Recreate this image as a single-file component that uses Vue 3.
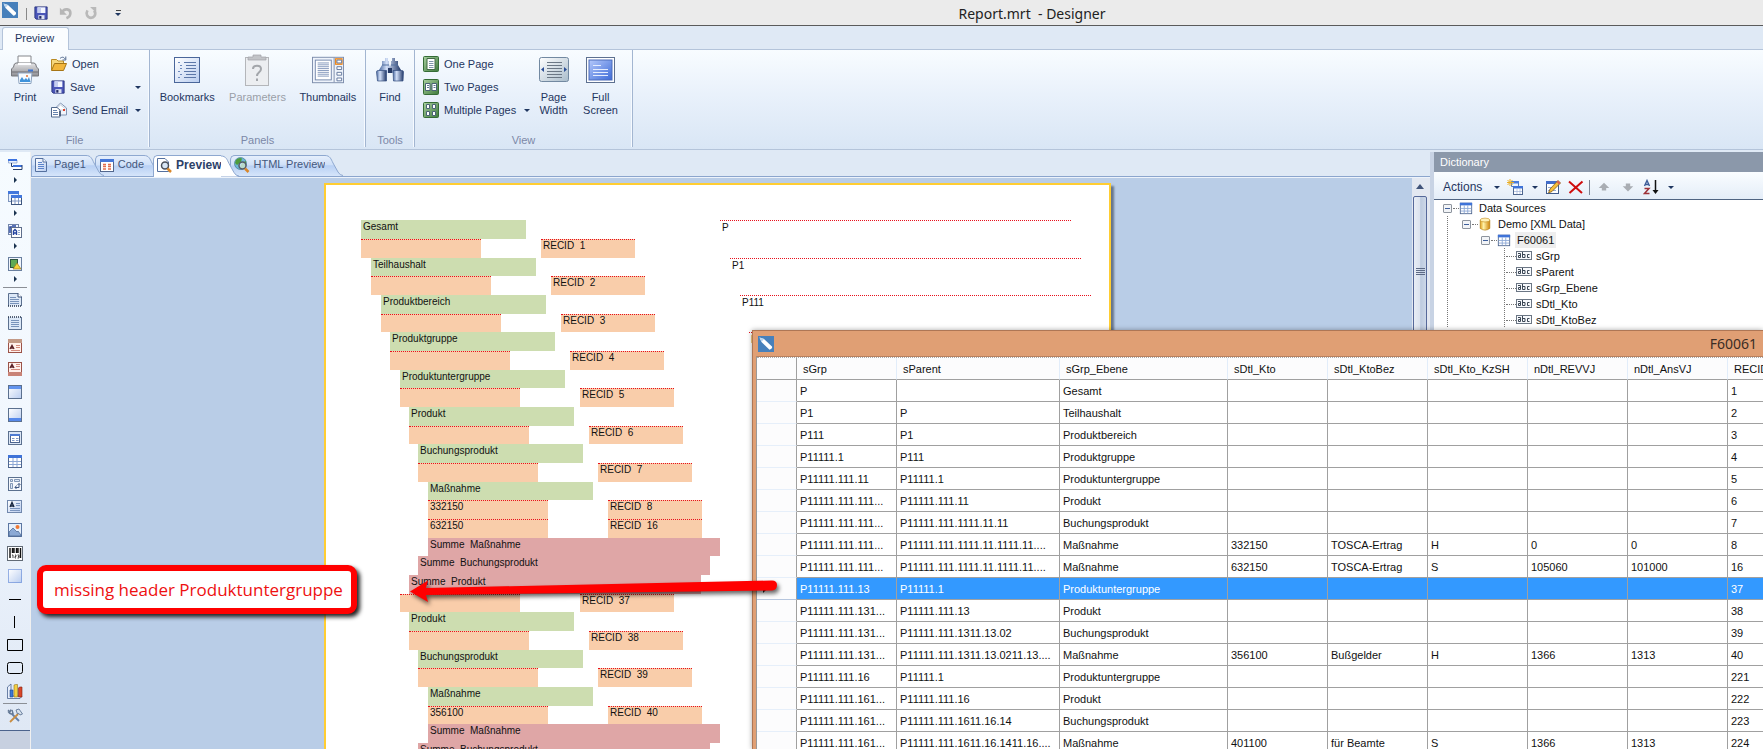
<script setup>
const reportRows = [
  { level: 0, kind: 'head', text: 'Gesamt', path: 'P' },
  { level: 0, kind: 'detail', recid: 1 },
  { level: 1, kind: 'head', text: 'Teilhaushalt', path: 'P1' },
  { level: 1, kind: 'detail', recid: 2 },
  { level: 2, kind: 'head', text: 'Produktbereich', path: 'P111' },
  { level: 2, kind: 'detail', recid: 3 },
  { level: 3, kind: 'head', text: 'Produktgruppe', path: 'P11111.1' },
  { level: 3, kind: 'detail', recid: 4 },
  { level: 4, kind: 'head', text: 'Produktuntergruppe' },
  { level: 4, kind: 'detail', recid: 5 },
  { level: 5, kind: 'head', text: 'Produkt' },
  { level: 5, kind: 'detail', recid: 6 },
  { level: 6, kind: 'head', text: 'Buchungsprodukt' },
  { level: 6, kind: 'detail', recid: 7 },
  { level: 7, kind: 'head', text: 'Maßnahme' },
  { level: 7, kind: 'detail', text: '332150', recid: 8 },
  { level: 7, kind: 'detail', text: '632150', recid: 16 },
  { level: 7, kind: 'sum', text: 'Summe  Maßnahme' },
  { level: 6, kind: 'sum', text: 'Summe  Buchungsprodukt' },
  { level: 5, kind: 'sum', text: 'Summe  Produkt' },
  { level: 4, kind: 'detail', recid: 37 },
  { level: 5, kind: 'head', text: 'Produkt' },
  { level: 5, kind: 'detail', recid: 38 },
  { level: 6, kind: 'head', text: 'Buchungsprodukt' },
  { level: 6, kind: 'detail', recid: 39 },
  { level: 7, kind: 'head', text: 'Maßnahme' },
  { level: 7, kind: 'detail', text: '356100', recid: 40 },
  { level: 7, kind: 'sum', text: 'Summe  Maßnahme' },
  { level: 6, kind: 'sum', text: 'Summe  Buchungsprodukt' },
]

const columns = ['sGrp', 'sParent', 'sGrp_Ebene', 'sDtl_Kto', 'sDtl_KtoBez', 'sDtl_Kto_KzSH', 'nDtl_REVVJ', 'nDtl_AnsVJ', 'RECID']

const records = [
  ['P', '', 'Gesamt', '', '', '', '', '', '1'],
  ['P1', 'P', 'Teilhaushalt', '', '', '', '', '', '2'],
  ['P111', 'P1', 'Produktbereich', '', '', '', '', '', '3'],
  ['P11111.1', 'P111', 'Produktgruppe', '', '', '', '', '', '4'],
  ['P11111.111.11', 'P11111.1', 'Produktuntergruppe', '', '', '', '', '', '5'],
  ['P11111.111.111...', 'P11111.111.11', 'Produkt', '', '', '', '', '', '6'],
  ['P11111.111.111...', 'P11111.111.1111.11.11', 'Buchungsprodukt', '', '', '', '', '', '7'],
  ['P11111.111.111...', 'P11111.111.1111.11.1111.11....', 'Maßnahme', '332150', 'TOSCA-Ertrag', 'H', '0', '0', '8'],
  ['P11111.111.111...', 'P11111.111.1111.11.1111.11....', 'Maßnahme', '632150', 'TOSCA-Ertrag', 'S', '105060', '101000', '16'],
  ['P11111.111.13', 'P11111.1', 'Produktuntergruppe', '', '', '', '', '', '37'],
  ['P11111.111.131...', 'P11111.111.13', 'Produkt', '', '', '', '', '', '38'],
  ['P11111.111.131...', 'P11111.111.1311.13.02', 'Buchungsprodukt', '', '', '', '', '', '39'],
  ['P11111.111.131...', 'P11111.111.1311.13.0211.13....', 'Maßnahme', '356100', 'Bußgelder', 'H', '1366', '1313', '40'],
  ['P11111.111.16', 'P11111.1', 'Produktuntergruppe', '', '', '', '', '', '221'],
  ['P11111.111.161...', 'P11111.111.16', 'Produkt', '', '', '', '', '', '222'],
  ['P11111.111.161...', 'P11111.111.1611.16.14', 'Buchungsprodukt', '', '', '', '', '', '223'],
  ['P11111.111.161...', 'P11111.111.1611.16.1411.16....', 'Maßnahme', '401100', 'für Beamte', 'S', '1366', '1313', '224'],
]
const selectedRecord = '37'

const toolGroups = [
  { icon: 'bands', label: 'Bands' },
  { icon: 'cross-bands', label: 'Cross bands' },
  { icon: 'components', label: 'Components' },
  { icon: 'shapes', label: 'Shapes' },
]
const tools = [
  'report-title', 'report-summary', 'page-header', 'page-footer', 'header-band', 'footer-band',
  'data-band', 'table', 'cross-tab', 'text', 'image', 'bar-code', 'panel', 'h-line', 'v-line',
  'rectangle', 'rounded-rectangle', 'chart',
]

const docTabs = [
  { icon: 'page', label: 'Page1' },
  { icon: 'code', label: 'Code' },
  { icon: 'magnifier-page', label: 'Preview', active: true },
  { icon: 'magnifier-globe', label: 'HTML Preview' },
]

const treeRows = [
  { guides: [], icon: 'table', label: 'Data Sources', open: true },
  { guides: ['line'], icon: 'database', label: 'Demo [XML Data]', open: true },
  { guides: ['line', 'blank'], icon: 'table', label: 'F60061', open: true, selected: true },
  ...['sGrp', 'sParent', 'sGrp_Ebene', 'sDtl_Kto', 'sDtl_KtoBez'].map((label) => ({
    guides: ['line', 'blank', 'blank'], icon: 'abc', label, leaf: true,
  })),
]
</script>

<template>
  <svg class="sprite" width="0" height="0" aria-hidden="true">
    <defs>
      <linearGradient id="gBlue" x1="0" y1="0" x2="1" y2="1"><stop offset="0" stop-color="#fff" /><stop offset="1" stop-color="#b9cdf0" /></linearGradient>
      <linearGradient id="gDeep" x1="0" y1="0" x2="1" y2="1"><stop offset="0" stop-color="#b5c9fb" /><stop offset="1" stop-color="#3d6bd8" /></linearGradient>
      <linearGradient id="gGreen" x1="0" y1="0" x2="1" y2="1"><stop offset="0" stop-color="#a9d0a0" /><stop offset="1" stop-color="#3f7a3c" /></linearGradient>
      <linearGradient id="gBarrel" x1="0" y1="0" x2="1" y2="0"><stop offset="0" stop-color="#4c6aa0" /><stop offset=".35" stop-color="#d3e0f8" /><stop offset="1" stop-color="#203768" /></linearGradient>
      <linearGradient id="gGold" x1="0" y1="0" x2="1" y2="0"><stop offset="0" stop-color="#e3a21c" /><stop offset=".35" stop-color="#fff2a8" /><stop offset="1" stop-color="#cf8409" /></linearGradient>
      <linearGradient id="gGrey" x1="0" y1="0" x2="0" y2="1"><stop offset="0" stop-color="#e6e6e8" /><stop offset="1" stop-color="#8d8d92" /></linearGradient>
      <linearGradient id="gSilver" x1="0" y1="0" x2="1" y2="1"><stop offset="0" stop-color="#fff" /><stop offset="1" stop-color="#a9bccb" /></linearGradient>
      <linearGradient id="gTab" x1="0" y1="0" x2="0" y2="1"><stop offset="0" stop-color="#e6effc" /><stop offset=".45" stop-color="#cfe0f8" /><stop offset=".5" stop-color="#b8d0f4" /><stop offset="1" stop-color="#d6e5fa" /></linearGradient>
    </defs>
    <symbol id="logo" viewBox="0 0 16 16"><rect width="16" height="16" fill="#4780bb" /><path d="M1.500 1.500L6 3L14 10.500Q14.500 13 11.500 13.800L3.500 6Z" fill="#fff" /><path d="M1.500 1.500L6 3L3.500 6Z" fill="#bcd5ee" /></symbol>
    <symbol id="save" viewBox="0 0 16 16"><path d="M1 1H15V15H2.500L1 13.500Z" fill="#4a55b8" stroke="#26307c" /><path d="M4 1.500H13V8H4Z" fill="#f2f5ff" /><path d="M4 1.500H8V8H4Z" fill="#c4cdf0" /><path d="M5 10.500H12V15H5Z" fill="#dde2f2" /><path d="M6 11.500H8.500V14.500H6Z" fill="#1f2763" /></symbol>
    <symbol id="undo" viewBox="0 0 16 16"><path d="M4 6.500C6 2.500 13 3 13 8C13 11.500 11 13 8.500 14" fill="none" stroke="#b6b6b6" stroke-width="3" /><path d="M1 2V10H9Z" fill="#b6b6b6" /></symbol>
    <symbol id="redo" viewBox="0 0 16 16"><path d="M11.500 5.500C15 10 11 13.500 8 13.500C4 13.500 1.500 9 4 5" fill="none" stroke="#b9b9b9" stroke-width="3" /><path d="M7 1H14V8Z" fill="#b9b9b9" /></symbol>
    <symbol id="print" viewBox="0 0 32 32"><path d="M9 2H22V12H9Z" fill="#fff" stroke="#85878c" /><path d="M4.500 13Q5 9 7 9H25Q27 9 27.500 13L29.500 15V22H2.500V15Z" fill="url(#gGrey)" stroke="#77787d" /><path d="M9 9H22V11H9Z" fill="#fdfdff" /><path d="M3 18H29" stroke="#6c6d73" /><path d="M19 16.500H24" stroke="#3e76d4" stroke-width="2" /><path d="M9 19H23L22 29.500H10Z" fill="#f5faff" stroke="#8ea4c0" /><path d="M11 28V26L13 23L15 26L17 24L18.500 26L20 23L21.500 28Z" fill="#3f93db" /><circle cx="18" cy="22" r="1" fill="#e37338" /></symbol>
    <symbol id="open" viewBox="0 0 16 16"><path d="M.500 14V3.500H5.500L7 5H12.500V7" fill="#f6d77c" stroke="#b98a24" /><path d="M.500 14.500L3.500 7.500H15.500L12.500 14.500Z" fill="#f2b63c" stroke="#a67516" /><path d="M9 2.500C11 .500 13 1 14 3M14.800 .500V4H11.500" fill="none" stroke="#51688c" /></symbol>
    <symbol id="email" viewBox="0 0 16 16"><path d="M4.500 6L9.500 1L15.500 6V13H8Z" fill="#f1f5fb" stroke="#8296b4" /><path d="M5 7L9.500 3L14 6.500V8H6Z" fill="#fff" stroke="#a9b8ce" stroke-width=".6" /><path d="M.500 5.500H6L9 8V15H.500Z" fill="#fff" stroke="#51688c" /><path d="M2 8.500H6M2 10.500H7M2 12.500H7" stroke="#6683ae" /><path d="M9 14V9" fill="none" stroke="#3a4b69" stroke-width="1.500" /><path d="M12 7H14V9H12Z" fill="#e0432d" /></symbol>
    <symbol id="bookmarks" viewBox="0 0 32 32"><rect x="3.500" y="3.500" width="25" height="25" fill="url(#gBlue)" stroke="#4a669a" /><path d="M13 8.500H25M15 11.500H25M15 14.500H25M13 17.500H25M15 20.500H25M13 23.500H25" stroke="#5c77a8" /><path d="M7 8.500H9M9 11.500H11M9 14.500H11M7 17.500H9M9 20.500H11M7 23.500H9" stroke="#6c89bd" /></symbol>
    <symbol id="parameters" viewBox="0 0 32 32"><rect x="4.500" y="3.500" width="23" height="28" fill="#eceef1" stroke="#b4b6ba" /><path d="M7 3H12V1H20V3H25V6H7Z" fill="#c2c4c8" stroke="#a0a2a7" stroke-width=".7" /><path d="M12 15C12 10.500 20 10.500 20 15C20 18.500 16 18 16 22M16 24.500V27" fill="none" stroke="#a3a6ab" stroke-width="2" /></symbol>
    <symbol id="thumbnails" viewBox="0 0 34 30"><rect x=".500" y="1.500" width="33" height="27" fill="#eef3fb" stroke="#7c8cab" /><rect x="3.500" y="4.500" width="17" height="21" fill="#fff" stroke="#7386ab" /><path d="M6 7.500H18M6 9.500H18M6 11.500H18M6 13.500H18M6 15.500H18M6 17.500H18M6 19.500H18M6 21.500H18" stroke="#8296bb" /><path d="M23.500 2V28" stroke="#7c8cab" /><rect x="25" y="3" width="7" height="6" fill="#fbbd72" stroke="#ee8313" /><path d="M26.500 4.500H31.500V7.500H26.500ZM26.500 11.500H31.500V14.500H26.500ZM26.500 17.500H31.500V20.500H26.500ZM26.500 23.500H31.500V26.500H26.500Z" fill="#fff" stroke="#61769d" /></symbol>
    <symbol id="find" viewBox="0 0 32 32"><path d="M11 4H14V7H15V10L16 13V19H5V16L8 11V7H11ZM18 4H21V7H24V11L27 16V19H16V13L17 10V7H18Z" fill="url(#gBarrel)" /><rect x="14" y="14" width="4" height="5" fill="#273b66" /><path d="M2.500 18Q2.500 16.500 4 16.500H12.500V27H3.500Z" fill="url(#gBarrel)" stroke="#344e80" stroke-width=".7" /><path d="M19 16.500H28Q29.500 16.500 29.500 18L29 27H19.500Z" fill="url(#gBarrel)" stroke="#344e80" stroke-width=".7" /><path d="M8 11H15M17 11H24" stroke="#52709f" /></symbol>
    <symbol id="one-page" viewBox="0 0 16 16"><rect x=".500" y=".500" width="15" height="15" rx="1" fill="url(#gGreen)" stroke="#356c36" /><path d="M4 2.500H12V13.500H4Z" fill="#fff" stroke="#426b46" /><path d="M6 5.500H10.500M6 7.500H10.500M6 9.500H10.500M6 11.500H10.500" stroke="#7f96a8" /></symbol>
    <symbol id="two-pages" viewBox="0 0 16 16"><rect x=".500" y=".500" width="15" height="15" rx="1" fill="url(#gGreen)" stroke="#356c36" /><path d="M2.500 4.500H7V11.500H2.500ZM9 4.500H13.500V11.500H9Z" fill="#fff" stroke="#4a6376" /><path d="M4 6.500H6M4 8.500H6M10.500 6.500H12.500M10.500 8.500H12.500" stroke="#5d7893" /></symbol>
    <symbol id="multi-pages" viewBox="0 0 16 16"><rect x=".500" y=".500" width="15" height="15" rx="1" fill="url(#gGreen)" stroke="#356c36" /><path d="M3.500 2.500H6.500V6.500H3.500ZM9.500 2.500H12.500V6.500H9.500ZM3.500 9.500H6.500V13.500H3.500ZM9.500 9.500H12.500V13.500H9.500Z" fill="#fff" stroke="#4a6376" /></symbol>
    <symbol id="page-width" viewBox="0 0 32 32"><rect x="1.500" y="3.500" width="29" height="24" rx="2" fill="url(#gSilver)" stroke="#7289a1" /><path d="M9 8.500H24M9 11.500H24M9 14.500H24M9 17.500H24M9 20.500H24M9 23.500H24" stroke="#6b7785" /><path d="M6 13V18L3 15.500ZM26 13V18L29 15.500Z" fill="#2d4f96" /></symbol>
    <symbol id="full-screen" viewBox="0 0 32 32"><rect x="1.500" y="3.500" width="28" height="25" fill="#fff" stroke="#5d7090" /><rect x="4" y="6" width="23" height="20" fill="url(#gDeep)" stroke="#4c6cba" /><path d="M8 11.500H16M8 15.500H23M8 18.500H23M8 21.500H23" stroke="#e5edff" /></symbol>
    <symbol id="page" viewBox="0 0 16 16"><path d="M.500 1.500H8L11.500 5V14.500H.500Z" fill="url(#gBlue)" stroke="#54709f" /><path d="M8 1.500V5H11.500" fill="#fff" stroke="#54709f" /><path d="M3 5.500H7M3 7.500H9M3 9.500H9M3 11.500H9" stroke="#5b83cb" /></symbol>
    <symbol id="code" viewBox="0 0 16 16"><rect x="1.500" y="2.500" width="13" height="12" fill="#fff" stroke="#52678e" /><path d="M1 2H15V5H1Z" fill="#4577d8" /><path d="M4 7.500H7M9 7.500H12M4 9.500H7M9 9.500H12M4 12H7M9 12H12" stroke="#e36f4d" stroke-width="1.500" /></symbol>
    <symbol id="magnifier-page" viewBox="0 0 16 16"><path d="M.500 1.500H8L11.500 5V14.500H.500Z" fill="#fff" stroke="#54709f" /><circle cx="8" cy="8.500" r="3.500" fill="#d8e6f5" stroke="#4a4f59" stroke-width="1.500" /><path d="M10.500 11.500L14 15" stroke="#d9872a" stroke-width="2.500" /></symbol>
    <symbol id="magnifier-globe" viewBox="0 0 16 16"><circle cx="6.500" cy="6.500" r="6" fill="#6cb6d6" stroke="#437b8f" stroke-width=".7" /><path d="M2 3Q5 0 8 1.500L7 5L3 8L1 6ZM8 6L12 4V9L9 12L6 10Z" fill="#4e9c3a" /><circle cx="8.500" cy="8.500" r="3.500" fill="#dceefa" fill-opacity=".75" stroke="#535c68" stroke-width="1.500" /><path d="M11 11.500L14.500 15" stroke="#d9872a" stroke-width="2.500" /></symbol>
    <symbol id="bands" viewBox="0 0 16 16"><path d="M1.500 3H10V6H1.500Z" fill="#e9f1ff" stroke="#829ac6" stroke-width=".7" /><path d="M1 2H10V4H1ZM6 8H15V10H6Z" fill="#3d73df" /><path d="M6 10H15V12.500H6Z" fill="#fff" /><path d="M6 12.500H15V8M4.500 6V9.500H6" fill="none" stroke="#263f6d" /></symbol>
    <symbol id="cross-bands" viewBox="0 0 16 16"><rect x="1.500" y="1.500" width="10" height="10" fill="#e8f0fd" stroke="#7e95bd" /><path d="M1 1H12V4H1Z" fill="#4277dc" /><rect x="4.500" y="5.500" width="10" height="9" fill="#fff" stroke="#3d567f" /><path d="M4 5H15V8H4Z" fill="#4277dc" /><path d="M8 8V14M11.500 8V14M5 11H14" stroke="#829ac6" /></symbol>
    <symbol id="components" viewBox="0 0 16 16"><rect x="1.500" y="1.500" width="10" height="10" fill="#f5f8fe" stroke="#7386ab" /><path d="M3 10V4H5M5 3H9" fill="none" stroke="#2444a0" stroke-width="1.500" /><rect x="4.500" y="4.500" width="10" height="10" fill="#fff" stroke="#5e6e8c" /><path d="M6.500 12V8L8 6.500L9.500 8V12M6.500 10H9.500" fill="none" stroke="#2444a0" stroke-width="1.400" /><path d="M11 7.500H13M11 9.500H13M11 11.500H13" stroke="#93abd0" /></symbol>
    <symbol id="shapes" viewBox="0 0 16 16"><rect x="1.500" y="1.500" width="13" height="13" fill="#f1f5fc" stroke="#697f9f" /><rect x="3.500" y="3.500" width="7" height="8" fill="#5eaa55" stroke="#2d5340" /><path d="M10 7L14 13H6Z" fill="#f6d33b" stroke="#987b20" stroke-width=".7" /></symbol>
    <symbol id="report-title" viewBox="0 0 16 16"><path d="M1.500 14V1.500H11L14.500 5V14" fill="#dce8f7" stroke="#5b708f" /><path d="M11 1V5H15" fill="#fff" stroke="#3a5078" /><path d="M3 5.500H9M3 7.500H12M3 9.500H12M3 11.500H12" stroke="#7893ba" /><path d="M1 14H15" stroke="#27354c" stroke-width="1.500" stroke-dasharray="1 1" /></symbol>
    <symbol id="report-summary" viewBox="0 0 16 16"><path d="M1.500 2V14.500H14.500V2" fill="#dce8f7" stroke="#5b708f" /><path d="M4 5.500H12M4 7.500H12M4 9.500H12M4 11.500H12" stroke="#7893ba" /><path d="M1 2H15" stroke="#27354c" stroke-width="1.500" stroke-dasharray="1 1" /></symbol>
    <symbol id="page-header" viewBox="0 0 16 16"><rect x="1.500" y="1.500" width="13" height="13" fill="#fff0ec" stroke="#9b5348" /><path d="M1 1H15V5H1Z" fill="#c39a87" /><path d="M3 11L5 7.500L7 11M4 10H6.500" fill="none" stroke="#5a1f25" stroke-width="1.400" /><path d="M9 7.500H13M9 9.500H13M4 12.500H13" stroke="#d38a7d" /></symbol>
    <symbol id="page-footer" viewBox="0 0 16 16"><rect x="1.500" y="1.500" width="13" height="13" fill="#fff0ec" stroke="#9b5348" /><path d="M1 11H15V15H1Z" fill="#c98377" /><path d="M3 7L5 3.500L7 7M4 6H6.500" fill="none" stroke="#5a1f25" stroke-width="1.400" /><path d="M9 3.500H13M9 5.500H13M4 8.500H13" stroke="#d38a7d" /></symbol>
    <symbol id="header-band" viewBox="0 0 16 16"><rect x="1.500" y="1.500" width="13" height="13" fill="url(#gBlue)" stroke="#5b708f" /><path d="M2 2H14V5H2Z" fill="#6394ee" /></symbol>
    <symbol id="footer-band" viewBox="0 0 16 16"><rect x="1.500" y="1.500" width="13" height="13" fill="url(#gBlue)" stroke="#5b708f" /><path d="M2 11H14V14H2Z" fill="#5588ea" /></symbol>
    <symbol id="data-band" viewBox="0 0 16 16"><rect x="1.500" y="1.500" width="13" height="13" fill="#dbe6f6" stroke="#5b708f" /><rect x="3.500" y="4.500" width="9" height="8" fill="#fff" stroke="#4d658f" /><path d="M3 4H13V6H3Z" fill="#4e7bd3" /><path d="M5 8.500H7.500M9 8.500H11.500M5 10.500H7.500M9 10.500H11.500" stroke="#7d96c5" /></symbol>
    <symbol id="table" viewBox="0 0 16 16"><rect x="1.500" y="2.500" width="13" height="12" fill="#fff" stroke="#4e668f" /><path d="M1 2H15V5H1Z" fill="#3f73d8" /><path d="M6 5V14M10 5V14M2 8.500H14M2 11.500H14" stroke="#8ca7d5" /></symbol>
    <symbol id="cross-tab" viewBox="0 0 16 16"><rect x="1.500" y="1.500" width="13" height="13" fill="#f5f8fd" stroke="#5b708f" /><path d="M3.500 3.500H5.500V5.500H3.500ZM7.500 3.500H12.500V5.500H7.500ZM3.500 7.500H5.500V12.500H3.500Z" fill="#dfe9f7" stroke="#6881a6" stroke-width=".8" /><path d="M8 11.500H12V7.500M9.500 9.500L8 11.500L9.500 13M10.500 9L12 7.500L13.500 9" fill="none" stroke="#405984" /></symbol>
    <symbol id="text" viewBox="0 0 16 16"><rect x=".500" y="1.500" width="14" height="12" fill="url(#gBlue)" stroke="#7188ad" /><path d="M3 8L5 3.500L7 8M4 7H6.500" fill="none" stroke="#14233d" stroke-width="1.400" /><path d="M9 4.500H13M9 6.500H13M3 9.500H13M3 11.500H13" stroke="#7b95bf" /></symbol>
    <symbol id="image" viewBox="0 0 16 16"><rect x="1.500" y="1.500" width="13" height="13" fill="#e6f0fd" stroke="#5b76a2" /><path d="M2 14V10L6 6L10 10L11 9L14 13V14Z" fill="#8ba9d5" stroke="#45618e" stroke-width=".7" /><circle cx="10.500" cy="5" r="2" fill="#ef7936" /></symbol>
    <symbol id="bar-code" viewBox="0 0 16 16"><rect x=".500" y="1.500" width="15" height="14" fill="#fff" stroke="#626b76" /><path d="M3 3V13M5.500 3V8M7 3V8M9.500 3V8M11 3V8M13.500 3V13" stroke="#111" stroke-width="1.400" /><path d="M5 10H6V13M8 10H9V11.500H8V13H9M10.500 10H12V13H10.500M11 11.500H12" fill="none" stroke="#222" stroke-width=".8" /></symbol>
    <symbol id="panel" viewBox="0 0 16 16"><rect x="1.500" y="1.500" width="13" height="13" fill="url(#gBlue)" stroke="#3a6bcc" stroke-dasharray="1 1" /></symbol>
    <symbol id="h-line" viewBox="0 0 16 16"><path d="M2 8.500H14" stroke="#000" /></symbol>
    <symbol id="v-line" viewBox="0 0 16 16"><path d="M7.500 2V14" stroke="#000" /></symbol>
    <symbol id="rectangle" viewBox="0 0 16 16"><path d="M.500 2.500H15.500V13.500H.500Z" fill="none" stroke="#000" /></symbol>
    <symbol id="rounded-rectangle" viewBox="0 0 16 16"><rect x=".500" y="2.500" width="15" height="11" rx="2" fill="none" stroke="#000" /></symbol>
    <symbol id="chart" viewBox="0 0 16 16"><path d="M.500 4L4 1V13H15L13 15.500H.500Z" fill="#e7eefb" stroke="#49638f" stroke-width=".8" /><path d="M3 7H6V14H3Z" fill="#3b77d6" stroke="#204789" stroke-width=".6" /><path d="M7 2L8.500 1.500H10.500V14H7Z" fill="#f3cf42" stroke="#92731c" stroke-width=".6" /><path d="M11.500 5L12.500 4H15V14H11.500Z" fill="#d9472a" stroke="#822313" stroke-width=".6" /></symbol>
    <symbol id="settings" viewBox="0 0 16 16"><path d="M5 6L12 13" stroke="#6481ab" stroke-width="1.800" /><path d="M1 2L3 4L4 1.500M1 3.500Q3 7 6 5.500L5 2" fill="none" stroke="#647996" stroke-width="1.400" /><path d="M11 6L3 14" stroke="#c98d42" stroke-width="1.800" /><path d="M9 2L12 1L15.500 6L13 7L12 5.500L10.500 6Z" fill="#d7e1ed" stroke="#53698c" stroke-width=".8" /></symbol>
    <symbol id="database" viewBox="0 0 16 16"><path d="M2.500 3.500V13Q8 17 13.500 13V3.500Z" fill="url(#gGold)" stroke="#ae7a10" stroke-width=".7" /><ellipse cx="8" cy="3.500" rx="5.500" ry="2.200" fill="#fff1b6" stroke="#c28c1c" stroke-width=".7" /></symbol>
    <symbol id="new-item" viewBox="0 0 16 16"><path d="M4.500 2.500H11.500V7.500H4.500Z" fill="#eef4ff" stroke="#5d7ab0" /><path d="M4 2H12V4.500H4Z" fill="#4a7cdc" /><rect x="6.500" y="7.500" width="9" height="8" fill="#fff" stroke="#4e668f" /><path d="M6 7H16V9.500H6Z" fill="#3f73d8" /><path d="M7 12.500H15M10 9.500V15M13 9.500V15" stroke="#9db3da" stroke-width=".7" /><path d="M3 0V7M0 3.500H7M.500 1L5.500 6M5.500 1L.500 6" stroke="#eaae23" /></symbol>
    <symbol id="edit" viewBox="0 0 16 16"><rect x="1.500" y="2.500" width="12" height="12" fill="#fff" stroke="#405b8b" /><path d="M1 2H14V5H1Z" fill="#426dca" /><path d="M3 8.500H11M3 11.500H11" stroke="#97acd4" /><path d="M13 1.500L15.500 4L7 12.500L3.500 14L5 10Z" fill="#f5bd38" stroke="#7e5c1f" stroke-width=".8" /><path d="M13 1.500L15.500 4L14 5.500L11.500 3Z" fill="#d75f54" /></symbol>
    <symbol id="delete" viewBox="0 0 16 16"><path d="M1 2.500L14 14M14.500 2.500L1.500 14" stroke="#cf0d0d" stroke-width="2" /></symbol>
    <symbol id="up" viewBox="0 0 16 16"><path d="M8 3L14 9H10.500V12H5.500V9H2Z" fill="#a9adb3" /></symbol>
    <symbol id="down" viewBox="0 0 16 16"><path d="M8 13L14 7H10.500V4H5.500V7H2Z" fill="#a9adb3" /></symbol>
    <symbol id="sort" viewBox="0 0 16 16"><path d="M1.500 7L4 1.500L6.500 7M2.500 5.500H5.500" fill="none" stroke="#3c5c98" stroke-width="1.400" /><path d="M1.500 9.500H6L1.500 14.500H6.500" fill="none" stroke="#9d3138" stroke-width="1.500" /><path d="M12.500 1V12" stroke="#111" stroke-width="1.500" /><path d="M9.500 11H15.500L12.500 15Z" fill="#111" /></symbol>
    <symbol id="abc" viewBox="0 0 16 16"><rect x=".500" y="3.500" width="15" height="8" fill="#f8fafd" stroke="#6b7684" /><path d="M2 5.500H4.500V9.500H2.500V7.500H4.500M6.500 4V9.500H9V6.500H6.500M13.500 6.500H11.500V9.500H13.500" fill="none" stroke="#3a4654" /></symbol>
  </svg>

  <div class="app">
    <header class="titlebar">
      <div class="quick">
        <svg class="i16"><use href="#logo" /></svg>
        <span class="quick-sep"></span>
        <button type="button" aria-label="Save"><svg class="i14"><use href="#save" /></svg></button>
        <button type="button" aria-label="Undo"><svg class="i14"><use href="#undo" /></svg></button>
        <button type="button" aria-label="Redo"><svg class="i14"><use href="#redo" /></svg></button>
        <button type="button" class="quick-more" aria-label="Customize toolbar"><i class="bar"></i><i class="caret"></i></button>
      </div>
      <h1>Report.mrt&nbsp; - Designer</h1>
    </header>

    <nav class="ribbon-tabs"><button type="button" class="ribbon-tab">Preview</button></nav>

    <section class="ribbon">
      <div class="group g-file">
        <div class="items">
          <button type="button" class="big"><svg><use href="#print" /></svg><span>Print</span></button>
          <div class="stack">
            <button type="button"><svg class="i16"><use href="#open" /></svg><span>Open</span></button>
            <button type="button"><svg class="i14"><use href="#save" /></svg><span>Save</span><i class="caret"></i></button>
            <button type="button"><svg class="i16"><use href="#email" /></svg><span>Send Email</span><i class="caret"></i></button>
          </div>
        </div>
        <div class="group-label">File</div>
      </div>
      <div class="group g-panels">
        <div class="items spread">
          <button type="button" class="big"><svg><use href="#bookmarks" /></svg><span>Bookmarks</span></button>
          <button type="button" class="big" disabled><svg><use href="#parameters" /></svg><span>Parameters</span></button>
          <button type="button" class="big"><svg><use href="#thumbnails" /></svg><span>Thumbnails</span></button>
        </div>
        <div class="group-label">Panels</div>
      </div>
      <div class="group g-tools">
        <div class="items spread">
          <button type="button" class="big"><svg><use href="#find" /></svg><span>Find</span></button>
        </div>
        <div class="group-label">Tools</div>
      </div>
      <div class="group g-view">
        <div class="items">
          <div class="stack wide">
            <button type="button"><svg class="i16"><use href="#one-page" /></svg><span>One Page</span></button>
            <button type="button"><svg class="i16"><use href="#two-pages" /></svg><span>Two Pages</span></button>
            <button type="button"><svg class="i16"><use href="#multi-pages" /></svg><span>Multiple Pages</span><i class="caret"></i></button>
          </div>
          <button type="button" class="big"><svg><use href="#page-width" /></svg><span>Page<br />Width</span></button>
          <button type="button" class="big"><svg><use href="#full-screen" /></svg><span>Full<br />Screen</span></button>
        </div>
        <div class="group-label">View</div>
      </div>
    </section>

    <main class="workspace">
      <aside class="toolbox">
        <div class="tool-list">
          <div v-for="g in toolGroups" :key="g.icon" class="tool-group">
            <button type="button" :aria-label="g.label"><svg class="i16"><use :href="'#' + g.icon" /></svg></button>
            <i class="fly"></i>
          </div>
          <hr />
          <div class="tool-stack">
            <button v-for="t in tools" :key="t" type="button" class="tool" :aria-label="t"><svg class="i16"><use :href="'#' + t" /></svg></button>
          </div>
          <hr />
          <button type="button" class="tool" aria-label="Toolbox settings"><svg class="i16"><use href="#settings" /></svg></button>
        </div>
      </aside>

      <section class="editor">
        <nav class="doc-tabs">
          <button v-for="t in docTabs" :key="t.label" type="button" class="doc-tab" :class="{ active: t.active }">
            <span class="doc-tab-body"><svg class="i16"><use :href="'#' + t.icon" /></svg><span>{{ t.label }}</span></span>
            <svg class="tail" width="18" height="21" viewBox="0 0 18 21">
              <path d="M0 .500C5 .500 6 4 8 8L13 17Q15 21 18 21H0Z" :fill="t.active ? '#fff' : 'url(#gTab)'" />
              <path d="M0 .500C5 .500 6 4 8 8L13 17Q15 20.500 18 20.500" fill="none" stroke="#8ea8d0" />
            </svg>
          </button>
        </nav>
        <div class="canvas-area">
          <div class="canvas">
            <article class="page">
              <div v-for="(r, i) in reportRows" :key="i" class="row" :class="['lv' + r.level, r.kind]">
                <span class="cell main">{{ r.text }}</span>
                <span v-if="r.recid" class="cell recid">RECID&nbsp; {{ r.recid }}</span>
                <span v-if="r.path" class="cell path">{{ r.path }}</span>
              </div>
            </article>
          </div>
          <div class="scrollbar"><span class="scroll-up"></span><span class="thumb"><i></i><i></i><i></i><i></i></span></div>
        </div>
      </section>

      <aside class="dictionary">
        <h2>Dictionary</h2>
        <div class="dict-tools">
          <button type="button" class="actions">Actions<i class="caret"></i></button>
          <button type="button" aria-label="New item"><svg class="i16"><use href="#new-item" /></svg><i class="caret"></i></button>
          <button type="button" aria-label="Edit"><svg class="i16"><use href="#edit" /></svg></button>
          <button type="button" aria-label="Delete"><svg class="i16"><use href="#delete" /></svg></button>
          <span class="vsep"></span>
          <button type="button" class="move" aria-label="Move up"><svg class="i14"><use href="#up" /></svg></button>
          <button type="button" class="move" aria-label="Move down"><svg class="i14"><use href="#down" /></svg></button>
          <button type="button" aria-label="Sort"><svg class="i16"><use href="#sort" /></svg><i class="caret"></i></button>
        </div>
        <ul class="tree">
          <li v-for="n in treeRows" :key="n.label">
            <span v-for="(g, k) in n.guides" :key="k" class="guide" :class="g"></span>
            <span v-if="n.open" class="guide node"><i class="expander"></i></span>
            <span v-else class="guide branch"></span>
            <svg :class="n.leaf ? 'i16' : 'i14'"><use :href="'#' + n.icon" /></svg>
            <span class="label" :class="{ selected: n.selected }">{{ n.label }}</span>
          </li>
        </ul>
      </aside>
    </main>

    <section class="data-window">
      <header><svg class="i16"><use href="#logo" /></svg><h2>F60061</h2></header>
      <div class="grid-wrap">
        <table>
          <colgroup><col class="c-sel" /><col class="c-100" /><col class="c-parent" /><col class="c-ebene" /><col v-for="n in 5" :key="n" class="c-100" /><col /></colgroup>
          <thead><tr><th></th><th v-for="c in columns" :key="c">{{ c }}</th></tr></thead>
          <tbody>
            <tr v-for="r in records" :key="r[8]" :class="{ current: r[8] === selectedRecord }">
              <th scope="row"><i v-if="r[8] === selectedRecord" class="fly"></i></th>
              <td v-for="(v, i) in r" :key="i">{{ v }}</td>
            </tr>
          </tbody>
        </table>
      </div>
    </section>

    <svg class="pointer" width="390" height="44" viewBox="0 0 390 44" aria-hidden="true">
      <path d="M6 19.500L24 8.500L22 16L368 8.500Q373 8.500 373 13Q373 18 368 18.500L22 23L24 30Z" fill="#f00" />
    </svg>
    <div class="callout">missing header Produktuntergruppe</div>
  </div>
</template>

<style>
body { margin: 0; overflow: hidden; }
</style>

<style scoped>
* { box-sizing: border-box; }
.sprite { position: absolute; }
.app { position: relative; display: flex; flex-direction: column; height: 100vh; overflow: hidden; background: #dfe9f5; color: #1f3660; font: 11px/13px "Liberation Sans", Arial, sans-serif; }
button { display: flex; align-items: center; margin: 0; padding: 0; border: 0; background: none; color: inherit; font: inherit; }
h1, h2 { margin: 0; font-weight: normal; }
svg { display: block; flex: none; }
.i16 { width: 16px; height: 16px; }
.i14 { width: 14px; height: 14px; }
.caret { width: 0; height: 0; border: 3px solid transparent; border-top-color: #1f3660; border-bottom: 0; }
.fly { width: 0; height: 0; border: 3px solid transparent; border-left-color: #1b3350; border-right: 0; }

.titlebar { display: flex; align-items: center; height: 26px; flex: none; background: #ebebeb; border-bottom: 1px solid #5b5b5b; }
.quick { display: flex; align-items: center; width: 301px; height: 25px; padding: 0 2px 5px; }
.quick-sep { width: 1px; height: 12px; margin: 8px 7px 0 8px; background: #888; }
.quick button { height: 20px; padding-top: 6px; margin-right: 11px; }
.quick .quick-more { flex-direction: column; justify-content: center; gap: 2px; margin-left: 6px; }
.quick-more .bar { width: 5px; height: 1px; background: #444; }
.titlebar h1 { flex: 1; padding-top: 2px; text-align: center; color: #222; font: 14px/20px "Noto Sans", sans-serif; }

.ribbon-tabs { display: flex; height: 24px; flex: none; padding: 1px 2px 0; border-bottom: 1px solid #b4c4da; }
.ribbon-tab { height: 23px; padding: 0 14px 2px 12px; border: 1px solid #b4c4da; border-bottom: 0; border-radius: 3px 3px 0 0; background: #fafdff; }
.ribbon { display: flex; height: 100px; flex: none; margin-bottom: 2px; background: linear-gradient(#f8fcff, #e9f1fb 45%, #d9e6f5); border-bottom: 1px solid #b4c4da; }
.group { display: flex; flex-direction: column; height: 97px; padding-top: 4px; border-right: 1px solid #a3b6d1; box-shadow: inset -1px 0 #f6faff; }
.g-file { width: 150px; }
.g-panels { width: 216px; }
.g-tools { width: 49px; }
.g-view { width: 218px; }
.items { display: flex; flex: 1; padding-left: 1px; }
.spread { justify-content: space-around; padding: 0 2px; }
.big { flex-direction: column; gap: 5px; width: 48px; height: 76px; text-align: center; }
.big svg { width: 32px; height: 32px; }
.g-panels .big { width: 68px; }
.g-tools .big { width: 44px; }
.g-view .big { width: 47px; }
.big:disabled { color: #9a9fa8; }
.stack { display: flex; flex-direction: column; width: 92px; padding-left: 2px; }
.stack.wide { width: 114px; padding-left: 7px; }
.stack button { height: 23px; padding-bottom: 3px; gap: 5px; }
.stack .caret { margin-left: auto; }
.group-label { height: 20px; text-align: center; color: #7c88a8; line-height: 20px; }

.workspace { display: flex; flex: 1; min-height: 0; }
.toolbox { width: 31px; border-right: 1px solid #f0f0f0; background: #c7d0e0; }
.tool-list { display: flex; flex-direction: column; align-items: center; padding: 3px 1px; border-bottom: 1px solid #4c638c; background: linear-gradient(#f6fbff, #f1f7fe 50%, #dfe8f5); }
.tool-group { display: flex; flex-direction: column; align-items: center; height: 33px; }
.tool-group button { height: 20px; }
.tool-group .fly { margin-top: 2px; }
.tool-stack { margin-bottom: 1px; }
.tool { height: 23px; }
.toolbox hr { width: 24px; height: 1px; margin: 0; border: 0; background: #8b8f96; }

.editor { display: flex; flex: 1; flex-direction: column; min-width: 0; }
.doc-tabs { display: flex; height: 25px; padding-top: 3px; border-bottom: 1px solid #8ba5cd; }
.doc-tab { position: relative; height: 21px; margin-right: -9px; color: #44577c; }
.doc-tab:nth-child(1) { z-index: 2; }
.doc-tab:nth-child(2) { z-index: 1; }
.doc-tab.active { z-index: 3; height: 22px; color: #2c4168; font-weight: bold; font-size: 12px; }
.doc-tab-body { display: flex; align-items: center; gap: 3px; height: 100%; padding: 0 0 3px 3px; border: 1px solid #8ea8d0; border-width: 1px 0 0 1px; border-radius: 5px 0 0; background: linear-gradient(#e6effc, #cfe0f8 45%, #b8d0f4 50%, #d6e5fa); }
.active .doc-tab-body { background: #fff; }
.doc-tab .tail { align-self: stretch; height: 100%; }
.canvas-area { display: flex; flex: 1; min-height: 0; padding-top: 1px; background: #edf3fb; }
.canvas { flex: 1; min-width: 0; padding: 5px 0 0 293px; overflow: hidden; background: #b9cde7; }
.page { width: 787px; padding: 35px; border: 2px solid #ffcd32; background: #fff; box-shadow: 3px 3px 2px #66758c; color: #111; font-size: 10px; }
.row { display: flex; height: 19px; white-space: pre; }
.row:nth-child(3n) { height: 18px; }
.lv1 { padding-left: 10px; }
.lv2 { padding-left: 20px; }
.lv3 { padding-left: 29px; }
.lv4 { padding-left: 39px; }
.lv5 { padding-left: 48px; }
.lv6 { padding-left: 57px; }
.lv7 { padding-left: 67px; }
.cell { flex: none; padding-left: 2px; }
.head .main { width: 165px; background: #cdddb0; }
.detail .main { width: 120px; border-top: 1px dotted #e8101c; background: #f9cdaa; }
.sum .main { width: 292px; background: #dfa6a6; }
.recid { width: 94px; margin-left: 60px; border-top: 1px dotted #e8101c; background: #f9cdaa; }
.path { width: 351px; margin-left: 194px; border-top: 1px dotted #e8101c; }
.detail .cell { line-height: 12px; }
.scrollbar { display: flex; flex-direction: column; width: 18px; padding: 0 3px 0 1px; background: #e3e8f1; }
.scroll-up { width: 0; height: 0; margin: 6px auto 7px; border: 4px solid transparent; border-bottom: 5px solid #41547a; border-top: 0; }
.thumb { display: flex; flex: 1; flex-direction: column; gap: 1px; align-items: center; padding-top: 71px; border: 1px solid #56699a; border-radius: 2px 2px 0 0; background: linear-gradient(90deg, #e8edf5, #dbe2ee 50%, #bccadf 55%, #cdd8e8); }
.thumb i { width: 9px; height: 1px; background: #5d6a85; }

.dictionary { width: 333px; border-left: 4px solid #c8d3e4; background: #fff; }
.dictionary h2 { height: 20px; padding-left: 6px; background: #8b98aa; color: #fff; font-size: 11px; line-height: 20px; }
.dict-tools { display: flex; align-items: center; height: 28px; padding: 3px 0 0 9px; gap: 7px; border-bottom: 1px solid #506482; background: linear-gradient(#fafdff, #e4edf8); }
.dict-tools button { gap: 9px; }
.dict-tools .actions { gap: 12px; font-size: 12px; }
.dict-tools .move { width: 17px; justify-content: center; }
.vsep { width: 1px; height: 15px; margin: 0 -2px; background: #7c8595; }
.tree { margin: 0; padding: 0 0 0 4px; list-style: none; color: #111; }
.tree li { display: flex; align-items: center; height: 16px; }
.guide { position: relative; width: 19px; height: 16px; }
.guide.line, .guide.branch { background: repeating-linear-gradient(#777 0 1px, transparent 1px 2px) 9px 0 / 1px 100% no-repeat; }
.guide.node, .guide.branch { margin-right: 2px; }
.guide.branch::after, .guide.node::after { content: ""; position: absolute; top: 8px; right: -2px; width: 10px; border-top: 1px dotted #777; }
.guide.node { display: flex; align-items: center; justify-content: center; }
.guide.node::after { width: 6px; }
.expander { width: 9px; height: 9px; border: 1px solid #8d949e; border-radius: 1px; background: linear-gradient(#3e5f9c, #3e5f9c) center / 5px 1px no-repeat #f2f4f7; }
.label { margin-left: 4px; padding: 0 2px; line-height: 16px; }
.i16 + .label { margin-left: 2px; }
.label.selected { background: #eee; }

.data-window { position: absolute; left: 752px; top: 330px; right: 0; bottom: 0; overflow: hidden; padding-left: 3px; border: 1px solid #ae7655; border-width: 1px 0 0 1px; background: #e09f74; box-shadow: 0 0 5px rgba(0, 0, 0, .35); }
.data-window header { display: flex; align-items: center; justify-content: space-between; height: 25px; padding: 0 6px 0 2px; }
.data-window h2 { color: #3a2c25; font: 14px/20px "Noto Sans", sans-serif; }
.grid-wrap { border-top: 1px solid #b8805e; border-left: 1px solid #999; background: #fff; }
table { width: 100%; table-layout: fixed; border-collapse: separate; border-spacing: 0; border-top: 1px dotted #aaa; color: #111; }
.c-sel { width: 40px; }
.c-100 { width: 100px; }
.c-parent { width: 163px; }
.c-ebene { width: 168px; }
th, td { overflow: hidden; height: 22px; padding: 1px 0 0 3px; border-right: 1px solid #a0a0a0; border-bottom: 1px solid #a0a0a0; text-align: left; font-weight: normal; white-space: nowrap; }
th:last-child, td:last-child { border-right: 0; }
thead th { padding-left: 6px; border-right-color: #e2edfa; background: #fcfcfd; }
thead th:first-child { border-right-color: #a0a0a0; }
tbody th { border-bottom-color: #e6effa; background: #fcfcfd; }
th .fly { display: block; margin-left: 3px; border-width: 4px 0 4px 4px; border-left-color: #222; }
.current td { background: #3399ff; color: #fff; }
.current th { border-bottom-color: #b6c6de; }
.pointer { position: absolute; left: 404px; top: 572px; filter: drop-shadow(2px 3px 2px rgba(0, 0, 0, .6)); }
.callout { position: absolute; left: 37px; top: 565px; padding: 7px 8px 6px 11px; border: 6px solid #f00; border-radius: 9px; background: #fff; color: #ee1010; box-shadow: 3px 3px 4px #222; font: 17px/24px "Open Sans", "Noto Sans", sans-serif; }
</style>
